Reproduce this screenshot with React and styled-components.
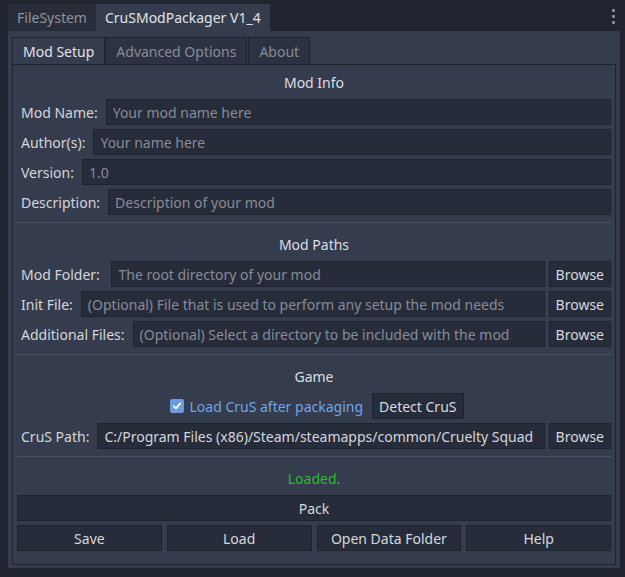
import React from 'react';
import styled, { createGlobalStyle } from 'styled-components';

const GlobalStyle = createGlobalStyle`
  html, body {
    margin: 0;
    padding: 0;
    background: #21252f;
  }
  body {
    font-family: 'Noto Sans', 'DejaVu Sans', sans-serif;
    font-size: 14px;
    color: #dcdee2;
  }
  * {
    box-sizing: border-box;
  }
`;

function App() {
  return (
    <>
      <GlobalStyle />
      <Window>
        <TopTabs>
          <TopTab>FileSystem</TopTab>
          <TopTab active>CruSModPackager V1_4</TopTab>
          <Kebab>
            <span />
            <span />
            <span />
          </Kebab>
        </TopTabs>
        <Dock>
          <InnerTabs>
            <InnerTab active>Mod Setup</InnerTab>
            <InnerTab>Advanced Options</InnerTab>
            <InnerTab>About</InnerTab>
          </InnerTabs>
          <InnerPanel>
            <SectionTitle>Mod Info</SectionTitle>
            <Row>
              <Label>Mod Name:</Label>
              <Input placeholder="Your mod name here" />
            </Row>
            <Row>
              <Label>Author(s):</Label>
              <Input placeholder="Your name here" />
            </Row>
            <Row>
              <Label>Version:</Label>
              <Input placeholder="1.0" />
            </Row>
            <Row>
              <Label>Description:</Label>
              <Input placeholder="Description of your mod" />
            </Row>

            <Separator />

            <SectionTitle>Mod Paths</SectionTitle>
            <Row>
              <Label>Mod Folder: </Label>
              <Input placeholder="The root directory of your mod" />
              <Button>Browse</Button>
            </Row>
            <Row>
              <Label>Init File:</Label>
              <Input placeholder="(Optional) File that is used to perform any setup the mod needs" />
              <Button>Browse</Button>
            </Row>
            <Row>
              <Label>Additional Files:</Label>
              <Input placeholder="(Optional) Select a directory to be included with the mod" />
              <Button>Browse</Button>
            </Row>

            <Separator />

            <SectionTitle>Game</SectionTitle>
            <CenterRow>
              <CheckLabel>
                <CheckBox>
                  <svg width="10" height="10" viewBox="0 0 10 10">
                    <path d="M1.6 5.2 L4 7.4 L8.4 2.4" fill="none" stroke="#ffffff" strokeWidth="1.8" strokeLinecap="round" strokeLinejoin="round" />
                  </svg>
                </CheckBox>
                Load CruS after packaging
              </CheckLabel>
              <Button>Detect CruS</Button>
            </CenterRow>
            <Row>
              <Label>CruS Path:</Label>
              <Input defaultValue="C:/Program Files (x86)/Steam/steamapps/common/Cruelty Squad" />
              <Button>Browse</Button>
            </Row>

            <Separator />

            <Status>Loaded.</Status>
            <Button wide>Pack</Button>
            <ButtonGrid>
              <Button>Save</Button>
              <Button>Load</Button>
              <Button>Open Data Folder</Button>
              <Button>Help</Button>
            </ButtonGrid>
          </InnerPanel>
        </Dock>
      </Window>
    </>
  );
}

export default App;

const Window = styled.div`
  width: 625px;
  height: 577px;
  display: flex;
  flex-direction: column;
`;

const TopTabs = styled.div`
  display: flex;
  align-items: flex-end;
  height: 31px;
  padding-left: 8px;
`;

const TopTab = styled.div`
  height: 27px;
  line-height: 28px;
  padding: 0 9px;
  background: ${(p) => (p.active ? '#353c4e' : '#282d3a')};
  color: ${(p) => (p.active ? '#e0e2e6' : '#8f949c')};
`;

const Kebab = styled.div`
  margin-left: auto;
  align-self: flex-start;
  display: flex;
  flex-direction: column;
  gap: 3px;
  padding: 9px 10px 0 0;

  & span {
    width: 3px;
    height: 3px;
    border-radius: 1px;
    background: #8c9099;
  }
`;

const Dock = styled.div`
  display: flex;
  flex-direction: column;
  height: 537px;
  margin: 0 5px 0 8px;
  padding: 6px 4px 3px 4px;
  background: #353c4e;
`;

const InnerTabs = styled.div`
  display: flex;
  height: 28px;
`;

const InnerTab = styled.div`
  height: 28px;
  line-height: 27px;
  padding: 0 10px;
  background: ${(p) => (p.active ? '#353c4e' : '#2c3243')};
  color: ${(p) => (p.active ? '#e0e2e6' : '#878c96')};
  border: 1px solid #1f2330;
  border-bottom: ${(p) => (p.active ? 'none' : '1px solid #1f2330')};
  margin-right: ${(p) => (p.active ? '0' : '1px')};
`;

const InnerPanel = styled.div`
  flex: 1;
  display: flex;
  flex-direction: column;
  gap: 4px;
  margin-top: -1px;
  padding: 4px 4px 0 4px;
  border: 1px solid #1f2330;
  background: #353c4e;
`;

const SectionTitle = styled.div`
  height: 26px;
  line-height: 27px;
  text-align: center;
  color: #dcdee2;
`;

const Row = styled.div`
  display: flex;
  align-items: stretch;
  height: 26px;
`;

const CenterRow = styled.div`
  display: flex;
  justify-content: center;
  align-items: stretch;
  height: 26px;
  padding-left: 6px;
`;

const Label = styled.div`
  line-height: 27px;
  padding: 0 8px 0 4px;
  white-space: pre;
  color: #d4d6da;
`;

const Input = styled.input`
  flex: 1;
  min-width: 0;
  height: 26px;
  padding: 1px 6px 0;
  margin: 0;
  border: 1px solid #1f2330;
  background: #272c3a;
  color: #d4d6da;
  font-family: inherit;
  font-size: 14px;
  outline: none;

  &::placeholder {
    color: #878b95;
    opacity: 1;
  }
`;

const Button = styled.div`
  height: 26px;
  line-height: 25px;
  padding: 0 6px;
  margin-left: ${(p) => (p.wide ? '0' : '4px')};
  border: 1px solid #1f2330;
  background: #272c3a;
  color: #d6d8dc;
  text-align: center;
  white-space: nowrap;
`;

const ButtonGrid = styled.div`
  display: grid;
  grid-template-columns: repeat(4, 1fr);
  gap: 5px;

  & > div {
    margin-left: 0;
  }
`;

const CheckLabel = styled.div`
  display: flex;
  align-items: center;
  gap: 5px;
  padding-right: 5px;
  color: #6fa5e6;
`;

const CheckBox = styled.span`
  display: inline-flex;
  align-items: center;
  justify-content: center;
  width: 14px;
  height: 14px;
  border-radius: 2px;
  background: #6a9de0;
`;

const Separator = styled.div`
  height: 1px;
  margin: 3px 0 4px;
  background: #4a5164;
`;

const Status = styled.div`
  height: 26px;
  line-height: 27px;
  text-align: center;
  color: #21c023;
`;
